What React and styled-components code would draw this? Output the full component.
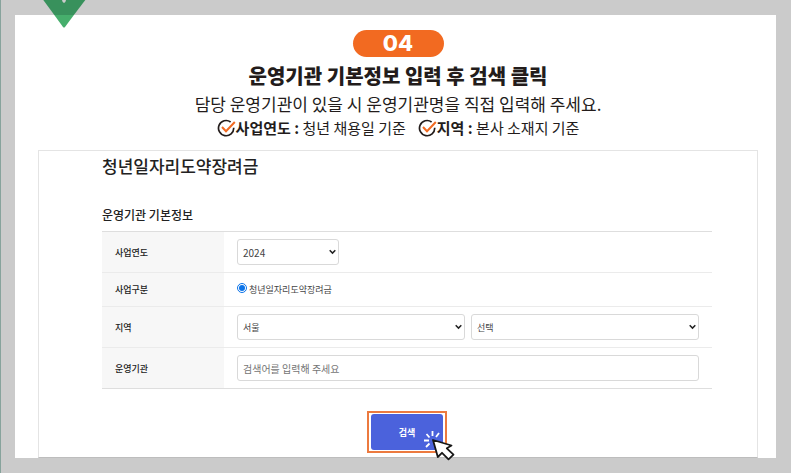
import React from "react";
import styled, { createGlobalStyle } from "styled-components";

const GlobalStyle = createGlobalStyle`
  * {
    box-sizing: border-box;
  }

  body {
    margin: 0;
    background: #cbcbcb;
    font-family: "Noto Sans CJK KR", "Noto Sans", sans-serif;
    color: #231c1b;
  }
`;

const Page = styled.div`
  position: relative;
  padding: 15px 15px 15px 14px;
  border-left: 1px solid #87a39c;
`;

const ArrowDown = styled.svg`
  position: absolute;
  top: 0;
  left: 41px;
  width: 44px;
  height: 28px;
`;

const Card = styled.main`
  padding: 15px 18px 0 23px;
  background: white;
`;

const Intro = styled.header`
  display: flex;
  flex-direction: column;
  align-items: center;
  text-align: center;
`;

const StepBadge = styled.span`
  width: 91px;
  border-radius: 14px;
  background: #f26a21;
  color: white;
  font-family: Inter, sans-serif;
  font-size: 22px;
  font-weight: 800;
  line-height: 27px;
`;

const Heading = styled.h1`
  margin: 4px 0 0;
  font-size: 20px;
  font-weight: 900;
  line-height: 30px;
`;

const Description = styled.p`
  margin: 0;
  font-size: 17px;
  line-height: 25px;
`;

const Notes = styled.ul`
  display: flex;
  gap: 12px;
  margin: 0;
  padding: 0;
  list-style: none;
`;

const Note = styled.li`
  display: flex;
  align-items: center;
  font-size: 15px;
  line-height: 24px;
  white-space: pre;

  svg {
    width: 19px;
    height: 18px;
  }
`;

const Screen = styled.section`
  margin-top: 10px;
  padding: 2px 45px 4px 63px;
  border: 1px solid #e4e4e4;
  border-bottom-color: #bdbdbd;
  color: #222;
`;

const ScreenTitle = styled.h2`
  margin: 0;
  font-size: 17px;
  font-weight: 500;
  line-height: 26px;
`;

const SectionTitle = styled.h3`
  margin: 26px 0 6px;
  font-size: 12px;
  font-weight: 500;
  line-height: 20px;
`;

const FormTable = styled.table`
  width: 100%;
  border-collapse: collapse;
  border-top: 1px solid #dedede;
  border-bottom: 1px solid #dedede;
  font-size: 9px;

  tr + tr {
    border-top: 1px solid #ebebeb;
  }

  th {
    width: 20%;
    padding: 0 13px;
    background: #f7f7f7;
    font-weight: 500;
    text-align: left;
  }

  td {
    height: 34px;
    padding: 7px 13px;
  }
`;

const Fields = styled.div`
  display: flex;
  align-items: center;
  gap: 6px;
`;

const SelectBox = styled.div`
  position: relative;
  flex: ${(props) => (props.$short ? "0 0 102px" : "1")};
  min-width: 0;

  select {
    display: block;
    width: 100%;
    height: 26px;
    padding: 0 16px 0 5px;
    appearance: none;
    border: 1px solid #d9d9d9;
    border-radius: 3px;
    background: white;
    color: #444;
    font-family: inherit;
    font-size: ${(props) => (props.$short ? "10px" : "9px")};
  }

  svg {
    position: absolute;
    top: 10px;
    right: 3px;
    width: 7px;
    height: 6px;
    pointer-events: none;
  }
`;

const TextInput = styled.input`
  display: block;
  width: 100%;
  height: 26px;
  padding: 0 5px;
  border: 1px solid #d9d9d9;
  border-radius: 3px;
  font-family: inherit;
  font-size: 10px;

  &::placeholder {
    color: #757575;
  }
`;

const RadioLabel = styled.label`
  display: flex;
  align-items: center;
  gap: 2px;
  color: #444;
  line-height: 18px;

  input {
    width: 10px;
    height: 10px;
    margin: 0 0 3px;
    accent-color: #0b73e8;
  }
`;

const Actions = styled.div`
  display: flex;
  justify-content: center;
  margin-top: 22px;
`;

const Highlight = styled.div`
  position: relative;
  padding: 1px 2px;
  border: 2px solid #ec7a3f;
`;

const SearchButton = styled.button`
  display: block;
  width: 72px;
  height: 36px;
  border: 0;
  border-radius: 3px;
  background: #4b62dc;
  color: white;
  font-family: inherit;
  font-size: 9px;
  font-weight: 700;
`;

const Pointer = styled.svg`
  position: absolute;
  top: 17px;
  right: -12px;
  width: 34px;
  height: 32px;
  pointer-events: none;
`;

const CheckIcon = () => (
  <svg viewBox="0 0 19 18" fill="none" aria-hidden="true">
    <path
      d="M13.6 3A7.6 7.6 0 1 0 16.7 8.8"
      stroke="#231c1b"
      strokeWidth="1.7"
    />
    <path d="M5 8L9 12.200L17.800 3" stroke="#f26a21" strokeWidth="2" />
  </svg>
);

const SelectField = ({ short, children, ...props }) => (
  <SelectBox $short={short}>
    <select {...props}>{children}</select>
    <svg viewBox="0 0 7 6" fill="none" aria-hidden="true">
      <path d="M0.7 1.3L3.5 4.1L6.3 1.3" stroke="#222" strokeWidth="1.5" />
    </svg>
  </SelectBox>
);

const ClickPointer = () => (
  <Pointer viewBox="0 0 34 32" fill="none" aria-hidden="true">
    <path
      d="M9.500 1V6M16 3L13 7M3.500 4L6.500 7.500M1 10.500H6M3 17L6.500 13.500"
      stroke="white"
      strokeWidth="1.8"
    />
    <path
      d="M10 10L14.800 27L19 22.800L25.500 29.300L30.500 24.700L23.800 18.300L28.500 15.500Z"
      fill="white"
      stroke="#171717"
      strokeWidth="1.8"
      strokeLinejoin="round"
    />
  </Pointer>
);

const notes = [
  { name: "사업연도", text: "청년 채용일 기준" },
  { name: "지역", text: "본사 소재지 기준" },
];

export default function App() {
  return (
    <Page>
      <GlobalStyle />
      <Card>
        <Intro>
          <StepBadge>04</StepBadge>
          <Heading>운영기관 기본정보 입력 후 검색 클릭</Heading>
          <Description>
            담당 운영기관이 있을 시 운영기관명을 직접 입력해 주세요.
          </Description>
          <Notes>
            {notes.map((note) => (
              <Note key={note.name}>
                <CheckIcon />
                <strong>{note.name} : </strong>
                {note.text}
              </Note>
            ))}
          </Notes>
        </Intro>

        <Screen>
          <ScreenTitle>청년일자리도약장려금</ScreenTitle>
          <SectionTitle>운영기관 기본정보</SectionTitle>
          <form onSubmit={(e) => e.preventDefault()}>
            <FormTable>
              <tbody>
                <tr>
                  <th scope="row">
                    <label htmlFor="year">사업연도</label>
                  </th>
                  <td>
                    <Fields>
                      <SelectField id="year" short>
                        <option>2024</option>
                      </SelectField>
                    </Fields>
                  </td>
                </tr>
                <tr>
                  <th scope="row">사업구분</th>
                  <td>
                    <RadioLabel>
                      <input type="radio" name="kind" defaultChecked />
                      청년일자리도약장려금
                    </RadioLabel>
                  </td>
                </tr>
                <tr>
                  <th scope="row">
                    <label htmlFor="region">지역</label>
                  </th>
                  <td>
                    <Fields>
                      <SelectField id="region">
                        <option>서울</option>
                      </SelectField>
                      <SelectField aria-label="지역 상세">
                        <option>선택</option>
                      </SelectField>
                    </Fields>
                  </td>
                </tr>
                <tr>
                  <th scope="row">
                    <label htmlFor="agency">운영기관</label>
                  </th>
                  <td>
                    <TextInput
                      id="agency"
                      type="text"
                      placeholder="검색어를 입력해 주세요"
                    />
                  </td>
                </tr>
              </tbody>
            </FormTable>
            <Actions>
              <Highlight>
                <SearchButton type="submit">검색</SearchButton>
                <ClickPointer />
              </Highlight>
            </Actions>
          </form>
        </Screen>
      </Card>
      <ArrowDown viewBox="0 0 44 28" aria-hidden="true">
        <path d="M1.3 0H43.3L31.9 15H12.3Z" fill="#38915c" />
        <path d="M12.3 15H31.9L23 27Q22 28.200 21 27Z" fill="#46ae6c" />
        <path d="M20 0H24Q23.500 3 22 3Q20.500 3 20 0Z" fill="#cbcbcb" />
      </ArrowDown>
    </Page>
  );
}
